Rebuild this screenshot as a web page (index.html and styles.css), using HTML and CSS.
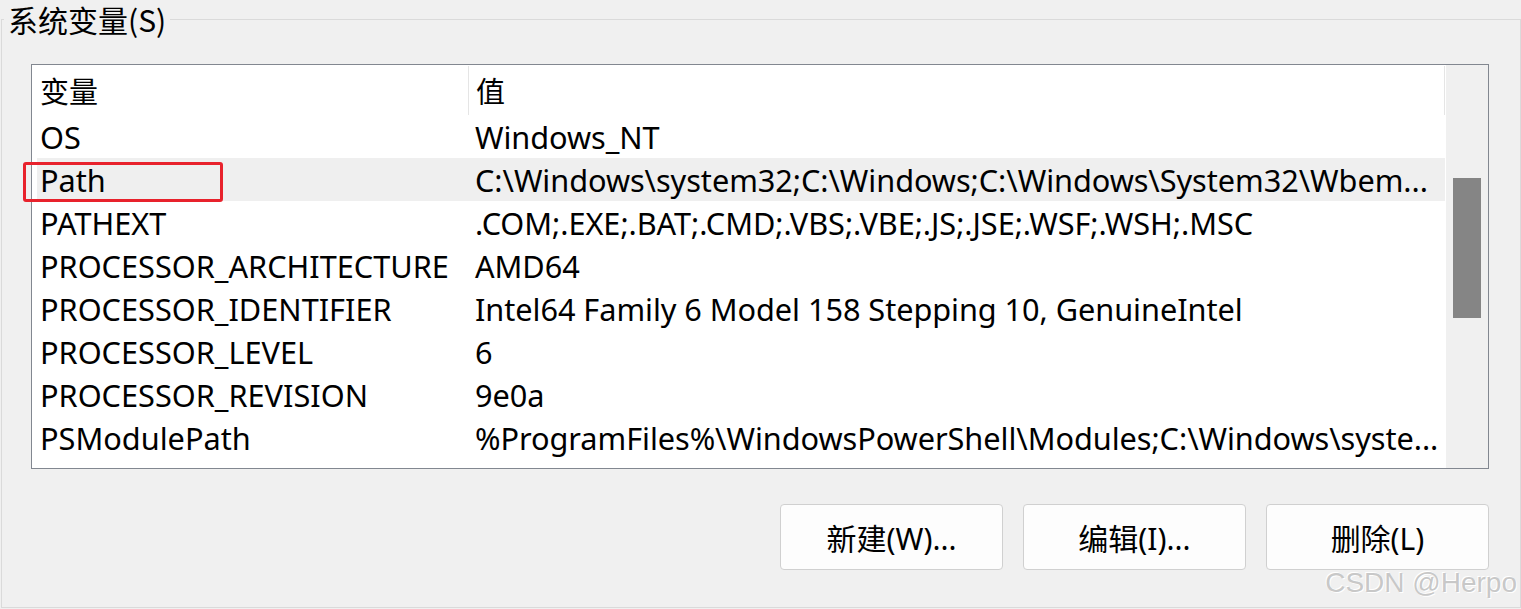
FILE: index.html
```html
<!DOCTYPE html>
<html lang="zh-CN">
<head>
<meta charset="utf-8">
<title>系统变量</title>
<link rel="stylesheet" href="styles.css">
</head>
<body>
<div class="page">
  <fieldset class="group">
    <legend class="group-title">系统变量(S)</legend>
    <div class="listview">
      <div class="list">
        <div class="header">
          <div class="col1">变量</div>
          <div class="col2">值</div>
          <div class="hdr-end"></div>
        </div>
        <div class="row"><div class="col1">OS</div><div class="col2">Windows_NT</div></div>
        <div class="row selected"><div class="col1">Path</div><div class="col2">C:\Windows\system32;C:\Windows;C:\Windows\System32\Wbem...</div></div>
        <div class="row"><div class="col1">PATHEXT</div><div class="col2">.COM;.EXE;.BAT;.CMD;.VBS;.VBE;.JS;.JSE;.WSF;.WSH;.MSC</div></div>
        <div class="row"><div class="col1">PROCESSOR_ARCHITECTURE</div><div class="col2">AMD64</div></div>
        <div class="row"><div class="col1">PROCESSOR_IDENTIFIER</div><div class="col2">Intel64 Family 6 Model 158 Stepping 10, GenuineIntel</div></div>
        <div class="row"><div class="col1">PROCESSOR_LEVEL</div><div class="col2">6</div></div>
        <div class="row"><div class="col1">PROCESSOR_REVISION</div><div class="col2">9e0a</div></div>
        <div class="row"><div class="col1">PSModulePath</div><div class="col2">%ProgramFiles%\WindowsPowerShell\Modules;C:\Windows\syste...</div></div>
      </div>
      <div class="scrollbar"><div class="thumb"></div></div>
    </div>
    <div class="buttons">
      <button class="btn">新建(W)...</button>
      <button class="btn">编辑(I)...</button>
      <button class="btn">删除(L)</button>
    </div>
  </fieldset>
  <div class="highlight-box"></div>
  <div class="watermark">CSDN @Herpo</div>
</div>
</body>
</html>
```
FILE: styles.css
```css
html, body {
  margin: 0;
  padding: 0;
  background: #f0f0f0;
}
body {
  width: 1521px;
  height: 609px;
  overflow: hidden;
  font-family: "Noto Sans", "Noto Sans CJK SC", sans-serif;
  font-size: 30.7px;
  color: #000;
}
.page {
  position: relative;
  width: 1521px;
  height: 609px;
}
.group {
  margin: 0 0 0 1px;
  padding: 0 31px 37px 29px;
  border: 1px solid #dadada;
  width: 1520px;
  box-sizing: border-box;
  min-width: 0;
}
.group-title {
  margin-left: -27px;
  padding: 0 4px 0 4px;
  height: 38px;
  line-height: 38px;
  font-family: "Noto Sans CJK SC", sans-serif;
  font-size: 30px;
}
.listview {
  margin-top: 26px;
  height: 405px;
  border: 1px solid #828790;
  background: #fff;
  box-sizing: border-box;
  display: flex;
}
.list {
  width: 1413px;
  overflow: hidden;
}
.header {
  height: 50px;
  display: flex;
  align-items: center;
  padding-left: 5px;
}
.header .col1, .header .col2 {
  font-family: "Noto Sans CJK SC", sans-serif;
  font-size: 29px;
  height: 49px;
  line-height: 49px;
}
.header .col2 {
  border-left: 1px solid #e5e5e5;
}
.hdr-end {
  margin-left: auto;
  width: 1px;
  height: 49px;
  background: #e5e5e5;
}
.row {
  height: 43px;
  margin-left: 5px;
  display: flex;
  align-items: center;
  white-space: nowrap;
}
.row.selected {
  background: #efefef;
}
.col1 {
  width: 428px;
  padding-left: 3px;
  flex: none;
  white-space: nowrap;
}
.col2 {
  padding-left: 7px;
  white-space: nowrap;
  letter-spacing: -0.05px;
}
.scrollbar {
  flex: 1;
  background: #f0f0f0;
  border-left: 1px solid #fff;
  padding: 113px 7px 0 7px;
}
.thumb {
  height: 140px;
  background: #858585;
}
.buttons {
  margin-top: 35px;
  display: flex;
  justify-content: flex-end;
  gap: 20px;
}
.btn {
  width: 223px;
  height: 66px;
  background: #fdfdfd;
  border: 1px solid #d0d0d0;
  border-radius: 4px;
  font-family: "Noto Sans", "Noto Sans CJK SC", sans-serif;
  font-size: 30px;
  color: #000;
  padding: 0;
}
.highlight-box {
  position: absolute;
  left: 23px;
  top: 162px;
  width: 200px;
  height: 40px;
  border: 3px solid #e8222c;
  border-radius: 3px;
  box-sizing: border-box;
}
.watermark {
  position: absolute;
  right: 4px;
  bottom: 10px;
  font-family: "Liberation Sans", sans-serif;
  font-size: 28px;
  color: #c8c8c8;
  text-shadow: 1px 1px 0 #fff, -1px -1px 0 #fff;
}
```
